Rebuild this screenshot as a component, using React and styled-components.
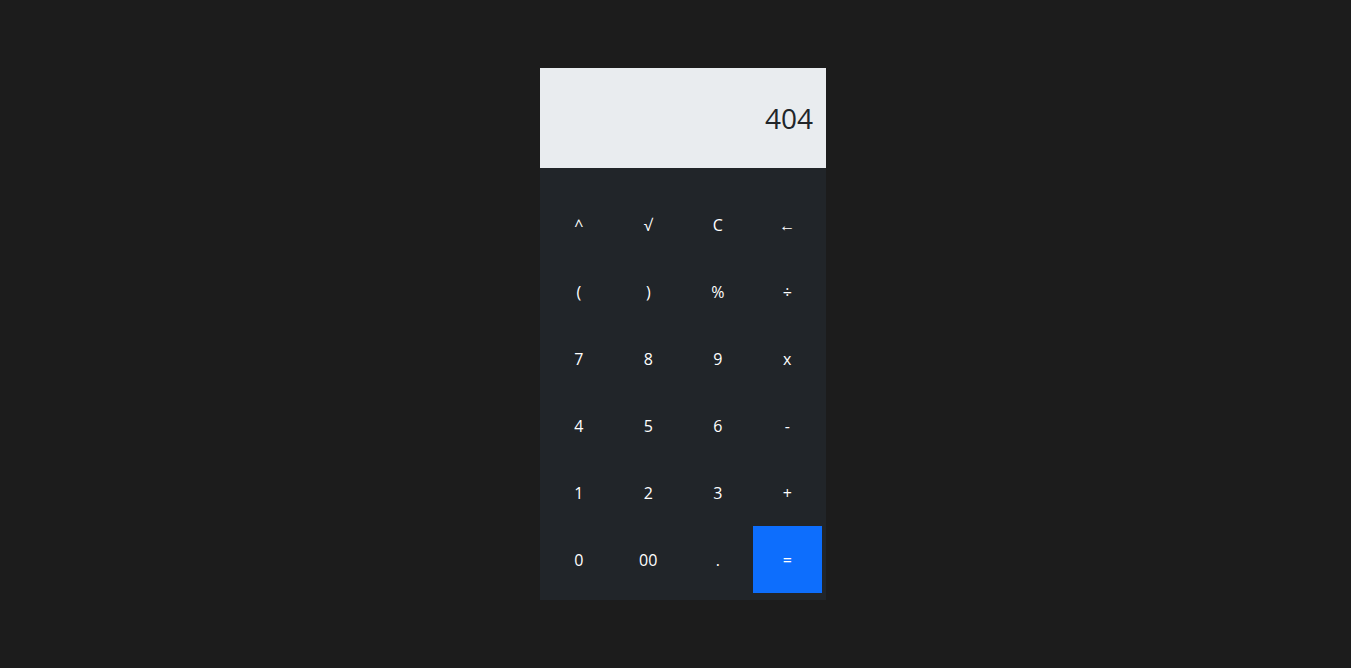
import React from 'react'
import styled, { createGlobalStyle } from 'styled-components';

const GlobalStyle = createGlobalStyle`
  body {
    margin: 0;
    background: #1c1c1c;
    font-family: "Open Sans", "Noto Sans", sans-serif;
  }
`;

const Page = styled.div`
  min-height: 668px;
  display: flex;
  justify-content: center;
  padding: 68px 0 0 15px;
  box-sizing: border-box;
`;

const Calculator = styled.div`
  width: 286px;
  display: flex;
  flex-direction: column;
`;

const Display = styled.div`
  height: 100px;
  background: #e9ecef;
  color: #212529;
  display: flex;
  align-items: center;
  justify-content: flex-end;
  padding: 0 13px;
  font-size: 28px;
  box-sizing: border-box;
`;

const Keypad = styled.div`
  background: #212529;
  padding: 23px 4px 7px;
  display: grid;
  grid-template-columns: repeat(4, 1fr);
  grid-auto-rows: 67px;
`;

const Key = styled.button`
  border: none;
  background: ${p => (p.$primary ? '#0d6efd' : 'transparent')};
  color: #fff;
  font-family: inherit;
  font-size: 16px;
  cursor: pointer;
  padding: 0;
`;

const keys = [
  '^', '√', 'C', '←',
  '(', ')', '%', '÷',
  '7', '8', '9', 'x',
  '4', '5', '6', '-',
  '1', '2', '3', '+',
  '0', '00', '.', '=',
];

function App() {
  return (
    <>
      <GlobalStyle />
      <Page>
        <Calculator>
          <Display>404</Display>
          <Keypad>
            {keys.map(k => (
              <Key key={k} $primary={k === '='}>{k}</Key>
            ))}
          </Keypad>
        </Calculator>
      </Page>
    </>
  )
}

export default App
